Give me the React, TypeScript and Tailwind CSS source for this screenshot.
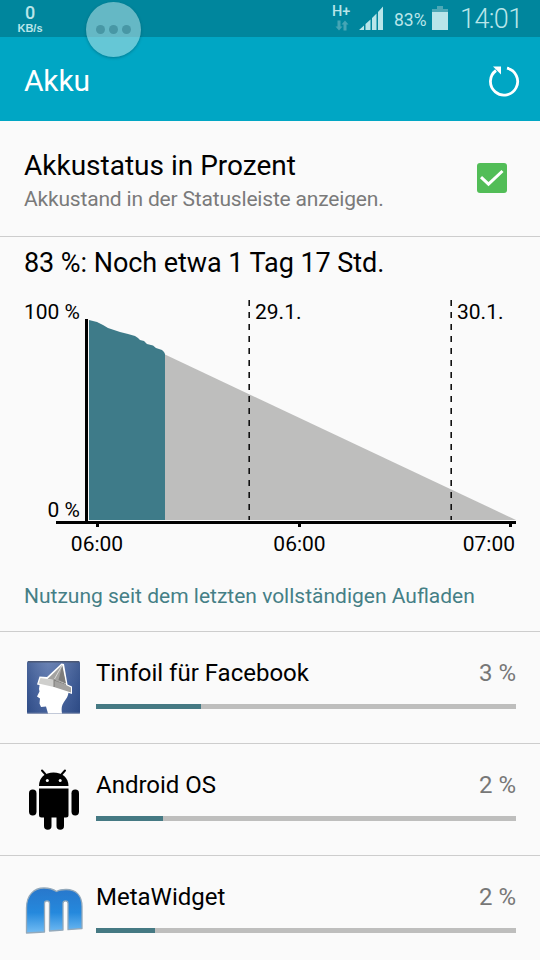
import type { ReactNode } from 'react';

interface UsageItem {
  id: string;
  name: string;
  percent: string;
  width: number;
  icon: ReactNode;
}

function TinfoilIcon() {
  return (
    <svg className="mr-[2px] h-[53px] w-[53px]" viewBox="0 0 53 53">
      <defs>
        <linearGradient id="tinfoil-bg" x1="0" y1="0" x2="0" y2="1">
          <stop offset="0" stopColor="#7187b5" />
          <stop offset="0.5" stopColor="#4f6ba5" />
          <stop offset="1" stopColor="#39558f" />
        </linearGradient>
        <linearGradient id="tinfoil-edge" x1="0" y1="0" x2="1" y2="0">
          <stop offset="0" stopColor="#24427c" stopOpacity="0.5" />
          <stop offset="0.4" stopColor="#5d79b0" stopOpacity="0.3" />
          <stop offset="1" stopColor="#24427c" stopOpacity="0.6" />
        </linearGradient>
      </defs>
      <rect width="53" height="53" rx="2" fill="url(#tinfoil-bg)" />
      <rect width="53" height="53" rx="2" fill="url(#tinfoil-edge)" />
      <path d="M1 .8h51" stroke="#4b5875" strokeWidth="1.600" />
      <path d="M.5 52.400h52" stroke="#8592b1" strokeWidth="1.200" />
      <path d="M13 21l-1 7 .5 2.500-2.500 5 3 2-.5 5 1.500 3.500 5-.5 2 7h14c-1-6 0-9 3-13 3-4 4-7 3.500-13l-12-7z" fill="#fff" />
      <path d="M12.500 15.500l7.500.5L34.500 2.500l2.500.5 3.500 20.500 4.500 2V33L30 28l-20-4.500z" fill="#fff" />
      <path d="M35 4L20.500 18l9 1.500 9 3z" fill="#a3a2a0" />
      <path d="M35.300 4.500L31.500 19l7.500 3.500z" fill="#7d7c7a" />
      <path d="M35 4.500L27.500 18" stroke="#d9d9d7" strokeWidth="1" />
      <path d="M13.500 17l13.500 2v7l-15.500-3.500z" fill="#cfcfcd" />
      <path d="M27 19l11 4.500 6 3v5l-17-5.500z" fill="#a3a2a0" />
      <path d="M27 19v7M27 19l12 4.500" stroke="#767573" strokeWidth="0.900" fill="none" />
    </svg>
  );
}

function AndroidIcon() {
  return (
    <svg className="mr-[1px] h-[62px] w-[52px]" viewBox="0 0 52 62" fill="#000">
      <path d="M11 17C11 8.500 17 3.500 25.500 3.500S40.500 8.500 40.500 17z" />
      <path d="M14 1.500l4 4.500M37 1.500L33 6" stroke="#000" strokeWidth="2" strokeLinecap="round" />
      <circle cx="19.300" cy="11.500" r="1.500" fill="#fafafa" />
      <circle cx="32.200" cy="11.500" r="1.500" fill="#fafafa" />
      <path d="M11 19.500h29.500V46a2.500 2.500 0 0 1-2.500 2.500H13.500A2.500 2.500 0 0 1 11 46z" />
      <rect x="1" y="20.500" width="7.500" height="26" rx="3.700" />
      <rect x="43.500" y="20.500" width="7.500" height="26" rx="3.700" />
      <path d="M16 45h7.500v12a3.700 3.700 0 0 1-7.500 0zM28.500 45H36v12a3.700 3.700 0 0 1-7.500 0z" />
    </svg>
  );
}

function MetaWidgetIcon() {
  return (
    <svg className="mb-[3px] h-[50px] w-[60px]" viewBox="0 0 60 50">
      <defs>
        <linearGradient id="meta-fill" x1="0" y1="0" x2="0" y2="1">
          <stop offset="0" stopColor="#2877cb" />
          <stop offset="0.55" stopColor="#2589dd" />
          <stop offset="1" stopColor="#72bcf3" />
        </linearGradient>
      </defs>
      <path
        d="M2.500 48V23C2.500 10 10 3 20 3c5 0 9 1 12.500 3.500C35 5 38 4.500 42 4.500c10 0 16 6 16 17V43.500l-14 1.200V18.500c0-3.500-5-3.500-5 0V45l-13.500 1V18.500c0-3.500-5-3.500-5 0V47z"
        fill="url(#meta-fill)"
        stroke="#93a9bb"
        strokeWidth="1.300"
        strokeLinejoin="round"
      />
    </svg>
  );
}

const usage: UsageItem[] = [
  { id: 'tinfoil', name: 'Tinfoil für Facebook', percent: '3 %', width: 105, icon: <TinfoilIcon /> },
  { id: 'android', name: 'Android OS', percent: '2 %', width: 67, icon: <AndroidIcon /> },
  { id: 'meta', name: 'MetaWidget', percent: '2 %', width: 59, icon: <MetaWidgetIcon /> },
];

function StatusBar() {
  return (
    <div className="relative flex h-[37px] items-start bg-[#00869d] text-[#b9e5e9]">
      <div className="ml-[15px] w-[30px] pt-[3px] text-center font-bold">
        <div className="text-[18px] leading-[19px] font-medium">0</div>
        <div className="font-['Liberation_Sans',sans-serif] text-[11px] leading-[12px]">KB/s</div>
      </div>
      <div className="ml-auto flex h-[37px] pr-[16px]">
        <div className="w-[25px] pt-[5px]">
          <div className="text-[14.500px] leading-[14px] font-medium">H+</div>
          <svg className="mt-[1px] ml-[3px] h-[11px] w-[14px]" viewBox="0 0 14 10" fill="#45a5b5">
            <path d="M2.500 0h3v6h2L4 10 .5 6h2zM8.500 10h3V4h2L10 0 6.500 4h2z" />
          </svg>
        </div>
        <svg className="mt-[6px] ml-[2px] h-[25px] w-[25px]" viewBox="0 0 25 25" fill="#b9e5e9">
          <path d="M0 24l5-4.500V24zM6.500 18l5-4.500V24h-5zM13 12l4.500-4.500V24H13zM19 6l5-5.500V24h-5z" />
        </svg>
        <div className="ml-[10px] w-[36px] pt-[10px] text-[17.500px] leading-[20px] whitespace-nowrap">83%</div>
        <svg className="mt-[6px] ml-[2px] h-[24px] w-[16px]" viewBox="0 0 16 24">
          <path d="M5 0h6v3h5v3H0V3h5z" fill="#4da8b6" />
          <path d="M0 6h16v18H0z" fill="#b9e5e9" />
        </svg>
        <div className="ml-[12px] w-[64px] text-[27px] leading-[39px] font-light tracking-[-0.6px] whitespace-nowrap">
          14:01
        </div>
      </div>
      <div className="absolute top-[2px] left-[86px] z-10 flex h-[55px] w-[55px] items-center justify-center gap-[4px] rounded-full bg-[#b8e1e5]/55 shadow-[0_1px_3px_rgba(0,70,85,0.45)]">
        {[0, 1, 2].map(dot => (
          <span key={dot} className="h-[9px] w-[9px] rounded-full bg-[#4897a5]" />
        ))}
      </div>
    </div>
  );
}

function BatteryChart() {
  return (
    <svg className="block h-[280px] w-[540px] text-[21px]" viewBox="0 290 540 280" fill="#000">
      <path d="M165 354.500L516 520H165z" fill="#bebebd" />
      <path
        d="M89 320l8 2 6 3 5 3 12 4 8 2 7 2 3 2 2 2 4 1 3 3 6 1.500 3 2.500 6 2 2 2 1 2v166H89z"
        fill="#3e7b89"
      />
      <path d="M85 319h3v202h-3zM56 521h460v3H56zM96 524h3v3h-3zM298 524h3v3h-3zM509 524h3v3h-3z" />
      <path d="M249.200 300v220M451.200 300v220" stroke="#111" strokeWidth="1.600" strokeDasharray="6 6" />
      <text x="80" y="319" textAnchor="end">100 %</text>
      <text x="80" y="517" textAnchor="end">0 %</text>
      <text x="255" y="319">29.1.</text>
      <text x="457" y="319">30.1.</text>
      <text x="97" y="551" textAnchor="middle">06:00</text>
      <text x="299.500" y="551" textAnchor="middle">06:00</text>
      <text x="515" y="551" textAnchor="end">07:00</text>
    </svg>
  );
}

function UsageRow({ item }: { item: UsageItem }) {
  return (
    <div className="flex h-[112px] border-t border-[#cdcdcd]">
      <div className="flex w-[96px] shrink-0 items-center justify-center pl-[12px]">{item.icon}</div>
      <div className="mr-[24px] flex-1 pt-[26px]">
        <div className="flex justify-between text-[24px] leading-[30px]">
          <span>{item.name}</span>
          <span className="text-[#777]">{item.percent}</span>
        </div>
        <div className="mt-[16px] h-[5px] bg-[#bebebd]">
          <div className="h-full bg-[#457983]" style={{ width: item.width }} />
        </div>
      </div>
    </div>
  );
}

export default function App() {
  return (
    <div className="h-[960px] w-[540px] overflow-hidden bg-[#fafafa] font-['Roboto',sans-serif] text-black">
      <StatusBar />
      <header className="flex h-[84px] items-center justify-between bg-[#00a6c4] pt-[3px] pr-[20px] pl-[24px] text-white">
        <h1 className="text-[30px] leading-[36px] tracking-[-0.2px]">Akku</h1>
        <svg className="h-[32px] w-[32px]" viewBox="0 0 32 32" fill="none">
          <path d="M19 3.200A13.600 13.600 0 1 1 8 5.500" stroke="#fff" strokeWidth="2.800" />
          <path d="M5 1.500h8v8z" fill="#fff" />
        </svg>
      </header>

      <section className="flex h-[116px] justify-between border-b border-[#cdcdcd] pr-[33px] pl-[24px]">
        <div className="pt-[27px]">
          <div className="text-[28px] leading-[36px]">Akkustatus in Prozent</div>
          <div className="text-[21px] leading-[30px] tracking-[-0.180px] text-[#7a7a7a]">
            Akkustand in der Statusleiste anzeigen.
          </div>
        </div>
        <div className="mt-[42px] h-[30px] w-[30px] rounded-[3px] bg-[#52bd57]">
          <svg viewBox="0 0 30 30" fill="none">
            <path d="M4 14.200l7.500 7L25.500 8" stroke="#fff" strokeWidth="3" />
          </svg>
        </div>
      </section>

      <section>
        <h2 className="h-[53px] pt-[8px] pl-[24px] text-[27px] leading-[36px] tracking-[-0.060px]">
          83 %: Noch etwa 1 Tag 17 Std.
        </h2>
        <BatteryChart />
        <p className="h-[61px] pt-[11px] pl-[24px] text-[21px] leading-[30px] text-[#457f86]">
          Nutzung seit dem letzten vollständigen Aufladen
        </p>
      </section>

      {usage.map(item => (
        <UsageRow key={item.id} item={item} />
      ))}
    </div>
  );
}
